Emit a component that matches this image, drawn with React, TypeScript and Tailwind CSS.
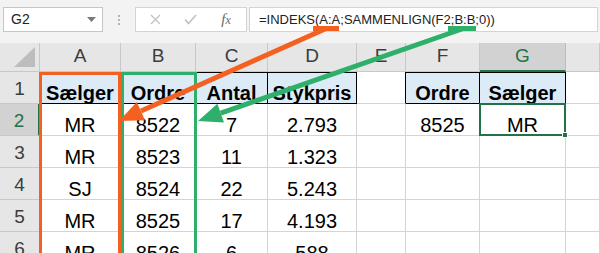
import React from 'react'

const COLS = ['A', 'B', 'C', 'D', 'E', 'F', 'G', '']

// rækker 2..6 (række 1 er overskrifterne)
const DATA: string[][] = [
  ['MR', '8522', '7', '2.793', '', '8525', 'MR', ''],
  ['MR', '8523', '11', '1.323', '', '', '', ''],
  ['SJ', '8524', '22', '5.243', '', '', '', ''],
  ['MR', '8525', '17', '4.193', '', '', '', ''],
  ['MR', '8526', '6', '588', '', '', '', ''],
]

const HEAD = ['Sælger', 'Ordre', 'Antal', 'Stykpris', '', 'Ordre', 'Sælger', '']

function FormulaBar() {
  return (
    <div className="h-[43px] bg-[#f3f3f3] flex items-start pt-[7px] pl-[3px] pr-[2px]">
      <div className="w-[100px] h-[25px] bg-white border border-[#c6c6c6] flex items-center justify-between pl-[7px] pr-[6px]">
        <span className="text-[14px] text-[#222]">G2</span>
        <svg width="9" height="5" viewBox="0 0 9 5">
          <polygon points="0,0 9,0 4.5,5" fill="#7a7a7a" />
        </svg>
      </div>
      <div className="w-[32px] h-[25px] flex flex-col items-center justify-center gap-[2px]">
        <span className="w-[2px] h-[2px] bg-[#b5b5b5]" />
        <span className="w-[2px] h-[2px] bg-[#b5b5b5]" />
        <span className="w-[2px] h-[2px] bg-[#b5b5b5]" />
      </div>
      <div className="w-[112px] h-[25px] bg-white border border-[#d4d4d4] flex items-center">
        <div className="w-[36px] flex justify-center pl-[2px]">
          <svg width="11" height="11" viewBox="0 0 11 11">
            <path d="M1 1 L10 10 M10 1 L1 10" stroke="#c2c2c2" strokeWidth="1.3" />
          </svg>
        </div>
        <div className="w-[36px] flex justify-center">
          <svg width="13" height="11" viewBox="0 0 13 11">
            <path d="M1 5.5 L4.5 9.5 L12 1" stroke="#c2c2c2" strokeWidth="1.6" fill="none" />
          </svg>
        </div>
        <div className="w-[36px] flex justify-center">
          <span className="font-['Liberation_Serif',serif] italic text-[15px] text-[#6a6a6a] leading-none">
            f<span className="text-[12px]">x</span>
          </span>
        </div>
      </div>
      <div className="flex-1 ml-[2px] h-[25px] bg-white border border-[#d4d4d4] flex items-center pl-[9px]">
        <span className="text-[13px] text-[#222] whitespace-nowrap">=INDEKS(A:A;SAMMENLIGN(F2;B:B;0))</span>
      </div>
    </div>
  )
}

function ColHeader({ c }: { c: string }) {
  const sel = c === 'G'
  return (
    <div
      className={
        sel
          ? 'bg-[#d2d2d2] border-r border-[#bdbdbd] border-b-2 border-b-[#217346] flex items-end justify-center pb-[0px] text-[19px] text-[#217346]'
          : 'bg-[#e6e6e6] border-r border-[#c8c8c8] border-b border-b-[#c8c8c8] flex items-end justify-center pb-[1px] text-[19px] text-[#3c3c3c]'
      }
    >
      {c}
    </div>
  )
}

function RowHeader({ n }: { n: number }) {
  const sel = n === 2
  return (
    <div
      className={
        sel
          ? 'bg-[#d2d2d2] border-r-2 border-[#217346] border-b border-b-[#c8c8c8] flex items-center justify-center pt-[3px] text-[19px] text-[#217346]'
          : 'bg-[#e6e6e6] border-r border-[#c8c8c8] border-b border-b-[#c8c8c8] flex items-center justify-center pt-[3px] text-[19px] text-[#3c3c3c]'
      }
    >
      {n}
    </div>
  )
}

function Corner() {
  return (
    <div className="bg-[#e6e6e6] border-r border-b border-[#c8c8c8] flex items-end justify-end pr-[4px] pb-[4px]">
      <svg width="21" height="20" viewBox="0 0 21 20">
        <polygon points="21,0 21,20 0,20" fill="#bdbdbd" />
      </svg>
    </div>
  )
}

function HeadCell({ text, i }: { text: string; i: number }) {
  const table = i <= 3 || i === 5 || i === 6
  if (!table) {
    return <div className={i === 4 ? 'border-r border-r-black border-b border-[#d4d4d4]' : 'border-r border-b border-[#d4d4d4]'} />
  }
  return (
    <div className="bg-[#ddebf7] border-t border-r border-b border-black flex items-start justify-center pt-[5px] text-[20px] font-bold text-black">
      {text}
    </div>
  )
}

function DataCell({ text, r, i }: { text: string; r: number; i: number }) {
  const active = r === 0 && i === 6
  return (
    <div
      className={
        active
          ? 'relative border-2 border-[#217346] -ml-[1px] -mt-[1px] flex items-start justify-center pt-[5px] text-[20px] text-black'
          : 'border-r border-b border-[#d4d4d4] flex items-start justify-center pt-[6px] text-[20px] text-black'
      }
    >
      {text}
      {active && <span className="absolute -right-[4px] -bottom-[4px] w-[6px] h-[6px] bg-[#217346] border border-white" />}
    </div>
  )
}

function Arrows() {
  return (
    <svg className="absolute left-0 top-0 pointer-events-none" width="600" height="253" viewBox="0 0 600 253">
      {/* kasser om kolonne A og B */}
      <rect x="40.5" y="73.5" width="79" height="200" fill="none" stroke="#f4601f" strokeWidth="3" />
      <rect x="122.5" y="73.5" width="73" height="200" fill="none" stroke="#2eb06a" strokeWidth="3" />
      {/* orange pil fra A:A */}
      <line x1="313" y1="28.5" x2="339" y2="28.5" stroke="#f4601f" strokeWidth="5" />
      <line x1="325" y1="29" x2="141" y2="111" stroke="#f4601f" strokeWidth="5" />
      <polygon points="119,121 145,120.3 136.8,102.1" fill="#f4601f" />
      {/* grøn pil fra B:B */}
      <line x1="448" y1="28.5" x2="476" y2="28.5" stroke="#2eb06a" strokeWidth="5" />
      <line x1="462" y1="29" x2="220.7" y2="113.1" stroke="#2eb06a" strokeWidth="5" />
      <polygon points="198,121 224,122.5 217.4,103.7" fill="#2eb06a" />
    </svg>
  )
}

export default function App() {
  return (
    <div className="relative w-[600px] h-[253px] overflow-hidden bg-white font-['Liberation_Sans',Arial,sans-serif]">
      <FormulaBar />
      <div className="grid grid-cols-[40px_81px_75px_72px_89px_49px_74px_86px_1fr] grid-rows-[29px_repeat(6,32px)]">
        <Corner />
        {COLS.map((c, i) => (
          <ColHeader key={i} c={c} />
        ))}
        <RowHeader n={1} />
        {HEAD.map((h, i) => (
          <HeadCell key={i} text={h} i={i} />
        ))}
        {DATA.map((row, r) => (
          <React.Fragment key={r}>
            <RowHeader n={r + 2} />
            {row.map((v, i) => (
              <DataCell key={i} text={v} r={r} i={i} />
            ))}
          </React.Fragment>
        ))}
      </div>
      <Arrows />
    </div>
  )
}
